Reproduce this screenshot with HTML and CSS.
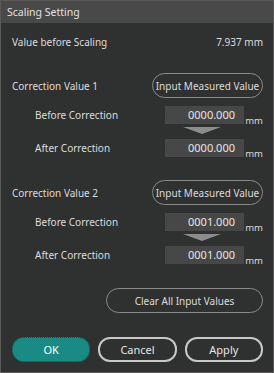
FILE: index.html
```html
<!DOCTYPE html>
<html lang="en">
<head>
  <meta charset="UTF-8">
  <title>Scaling Setting</title>
  <link rel="stylesheet" href="styles.css">
</head>
<body>
  <div class="dialog">
    <div class="titlebar">Scaling Setting</div>

    <div class="content">
      <div class="row value-row">
        <span>Value before Scaling</span>
        <span>7.937 mm</span>
      </div>

      <div class="section">
        <div class="row head-row">
          <span>Correction Value 1</span>
          <button class="pill measure">Input Measured Value</button>
        </div>
        <div class="row field-row">
          <span class="sub">Before Correction</span>
          <div class="field"><div class="box">0000.000</div><span class="unit">mm</span></div>
        </div>
        <div class="arrow"></div>
        <div class="row field-row">
          <span class="sub">After Correction</span>
          <div class="field"><div class="box">0000.000</div><span class="unit">mm</span></div>
        </div>
      </div>

      <div class="section">
        <div class="row head-row">
          <span>Correction Value 2</span>
          <button class="pill measure">Input Measured Value</button>
        </div>
        <div class="row field-row">
          <span class="sub">Before Correction</span>
          <div class="field"><div class="box">0001.000</div><span class="unit">mm</span></div>
        </div>
        <div class="arrow"></div>
        <div class="row field-row">
          <span class="sub">After Correction</span>
          <div class="field"><div class="box">0001.000</div><span class="unit">mm</span></div>
        </div>
      </div>

      <div class="clear-row">
        <button class="pill clear">Clear All Input Values</button>
      </div>

      <div class="buttons">
        <button class="btn ok">OK</button>
        <button class="btn">Cancel</button>
        <button class="btn">Apply</button>
      </div>
    </div>
  </div>
</body>
</html>
```

FILE: styles.css
```css
body {
  margin: 0;
  background: #2f3030;
  font-family: "Noto Sans", sans-serif;
  font-size: 10px;
  color: #dcdcdc;
}

.dialog {
  width: 274px;
  height: 373px;
  box-sizing: border-box;
  border: 1px solid #5a5a5a;
  background: #2f3030;
}

.titlebar {
  height: 22px;
  line-height: 22px;
  padding-left: 6px;
  background: #494949;
  font-size: 10.5px;
  color: #e2e2e2;
}

.content {
  padding: 0 10px 0 11px;
}

.row {
  display: flex;
  justify-content: space-between;
  align-items: center;
}

.value-row {
  height: 20px;
  margin-top: 9px;
}

.section {
  margin-top: 21px;
}

.section + .section {
  margin-top: 23px;
}

.head-row {
  height: 25px;
}

.pill {
  font-family: inherit;
  font-size: 10px;
  color: #dcdcdc;
  background: transparent;
  border: 1px solid #8a8a8a;
  border-radius: 13px;
  padding: 0;
  cursor: pointer;
}

.measure {
  width: 111px;
  height: 25px;
}

.field-row {
  height: 18px;
  margin-top: 8px;
}

.arrow + .field-row {
  margin-top: 0;
}

.sub {
  padding-left: 23px;
}

.field {
  display: flex;
  align-items: flex-end;
  height: 18px;
}

.box {
  width: 79px;
  height: 18px;
  box-sizing: border-box;
  background: #474747;
  text-align: right;
  padding-right: 9px;
  line-height: 18px;
  font-size: 11px;
  color: #e6e6e6;
}

.unit {
  width: 19px;
  text-align: right;
  line-height: 12px;
  margin-bottom: -3px;
  font-size: 9.5px;
}

.arrow {
  width: 0;
  height: 0;
  margin: 3px 0 5px 171px;
  border-left: 19px solid transparent;
  border-right: 19px solid transparent;
  border-top: 7px solid #8c8c8c;
}

.clear-row {
  display: flex;
  justify-content: flex-end;
  margin-top: 24px;
}

.clear {
  width: 157px;
  height: 25px;
}

.buttons {
  display: flex;
  gap: 8px;
  margin-top: 24px;
}

.btn {
  width: 79px;
  height: 25px;
  font-family: inherit;
  font-size: 11px;
  color: #e6e6e6;
  background: transparent;
  border: 2px solid #c8c8c8;
  border-radius: 12px;
  padding: 0;
  cursor: pointer;
}

.btn.ok {
  background: #1a8a84;
  border: 1px dotted #0d4e4a;
  box-shadow: inset 0 0 0 1px #1a8a84;
  color: #ffffff;
}
```
